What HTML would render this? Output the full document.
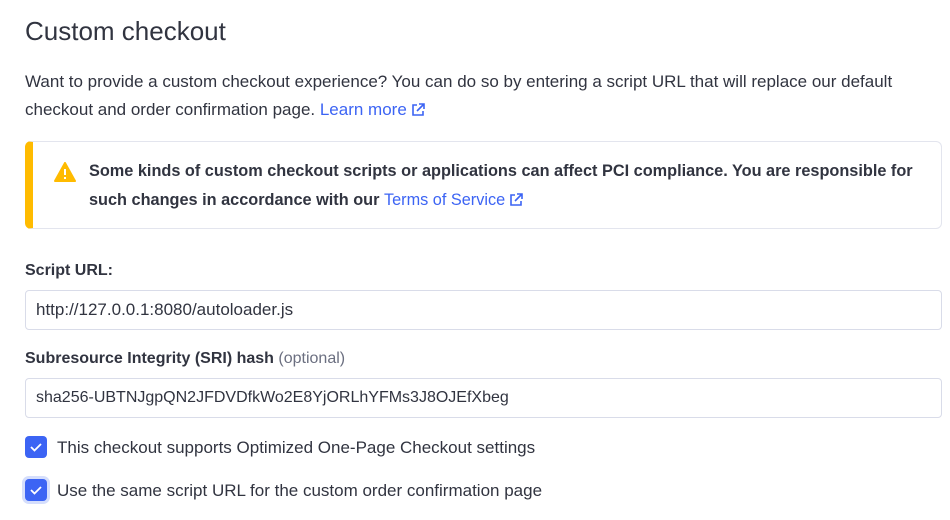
<!DOCTYPE html>
<html><head><style>
body{margin:0;background:#fff;font-family:"Liberation Sans",sans-serif;color:#313440;width:950px;height:520px;overflow:hidden;position:relative}
.a{position:absolute;white-space:nowrap}
a{color:#3c64f4;text-decoration:none}
.ext{display:inline-block;vertical-align:-2px;margin-left:4px}
.inp{position:absolute;left:25px;width:917px;height:40px;border:1px solid #d9dce9;border-radius:4px;box-sizing:border-box;font-size:16px;padding-left:10px;line-height:38px}
.cb{position:absolute;left:25px;width:22px;height:22px;background:#3c64f4;border-radius:4px}
</style></head><body>
<div class="a" style="left:25px;top:16px;font-size:26px;color:#313440">Custom checkout</div>
<div class="a" style="left:25px;top:68px;font-size:17px;line-height:28px">Want to provide a custom checkout experience? You can do so by entering a script URL that will replace our default<br>checkout and order confirmation page. <a>Learn more<svg class="ext" width="14" height="14" viewBox="0 0 14 14" fill="none" stroke="#3c64f4" stroke-width="1.6"><path d="M6 2H2v10h10V8M8 1h5v5M13 1L6 8"/></svg></a></div>
<div style="position:absolute;left:25px;top:141px;width:917px;height:88px;border:1px solid #e3e5ee;border-left:8px solid #ffbb00;border-radius:6px;box-sizing:border-box"></div>
<svg class="a" style="left:54px;top:162px" width="22" height="20" viewBox="0 0 22 20"><path d="M11 1L21 19H1Z" fill="#ffbb00" stroke="#ffbb00" stroke-linejoin="round" stroke-width="2"/><rect x="10" y="7" width="2" height="6" fill="#fff"/><rect x="10" y="15" width="2" height="2" fill="#fff"/></svg>
<div class="a" style="left:89px;top:157px;font-size:16.3px;line-height:29px;font-weight:bold;color:#313440">Some kinds of custom checkout scripts or applications can affect PCI compliance. You are responsible for<br>such changes in accordance with our <a style="font-weight:normal">Terms of Service<svg class="ext" width="14" height="14" viewBox="0 0 14 14" fill="none" stroke="#3c64f4" stroke-width="1.6"><path d="M6 2H2v10h10V8M8 1h5v5M13 1L6 8"/></svg></a></div>
<div class="a" style="left:25px;top:262px;font-size:16px;font-weight:bold">Script URL:</div>
<div class="inp" style="top:290px;font-size:17px">http://127.0.0.1:8080/autoloader.js</div>
<div class="a" style="left:25px;top:350px;font-size:16px;font-weight:bold">Subresource Integrity (SRI) hash <span style="font-weight:normal;color:#6b6f80">(optional)</span></div>
<div class="inp" style="top:378px">sha256-UBTNJgpQN2JFDVDfkWo2E8YjORLhYFMs3J8OJEfXbeg</div>
<div class="cb" style="top:436px"><svg width="22" height="22"><path d="M6 11l3.5 3.5L16 8" fill="none" stroke="#fff" stroke-width="1.8"/></svg></div>
<div class="a" style="left:57px;top:438px;font-size:17px">This checkout supports Optimized One-Page Checkout settings</div>
<div class="cb" style="top:479px;box-shadow:0 0 0 3px #d5defc"><svg width="22" height="22"><path d="M6 11l3.5 3.5L16 8" fill="none" stroke="#fff" stroke-width="1.8"/></svg></div>
<div class="a" style="left:57px;top:481px;font-size:17px">Use the same script URL for the custom order confirmation page</div>
</body></html>
